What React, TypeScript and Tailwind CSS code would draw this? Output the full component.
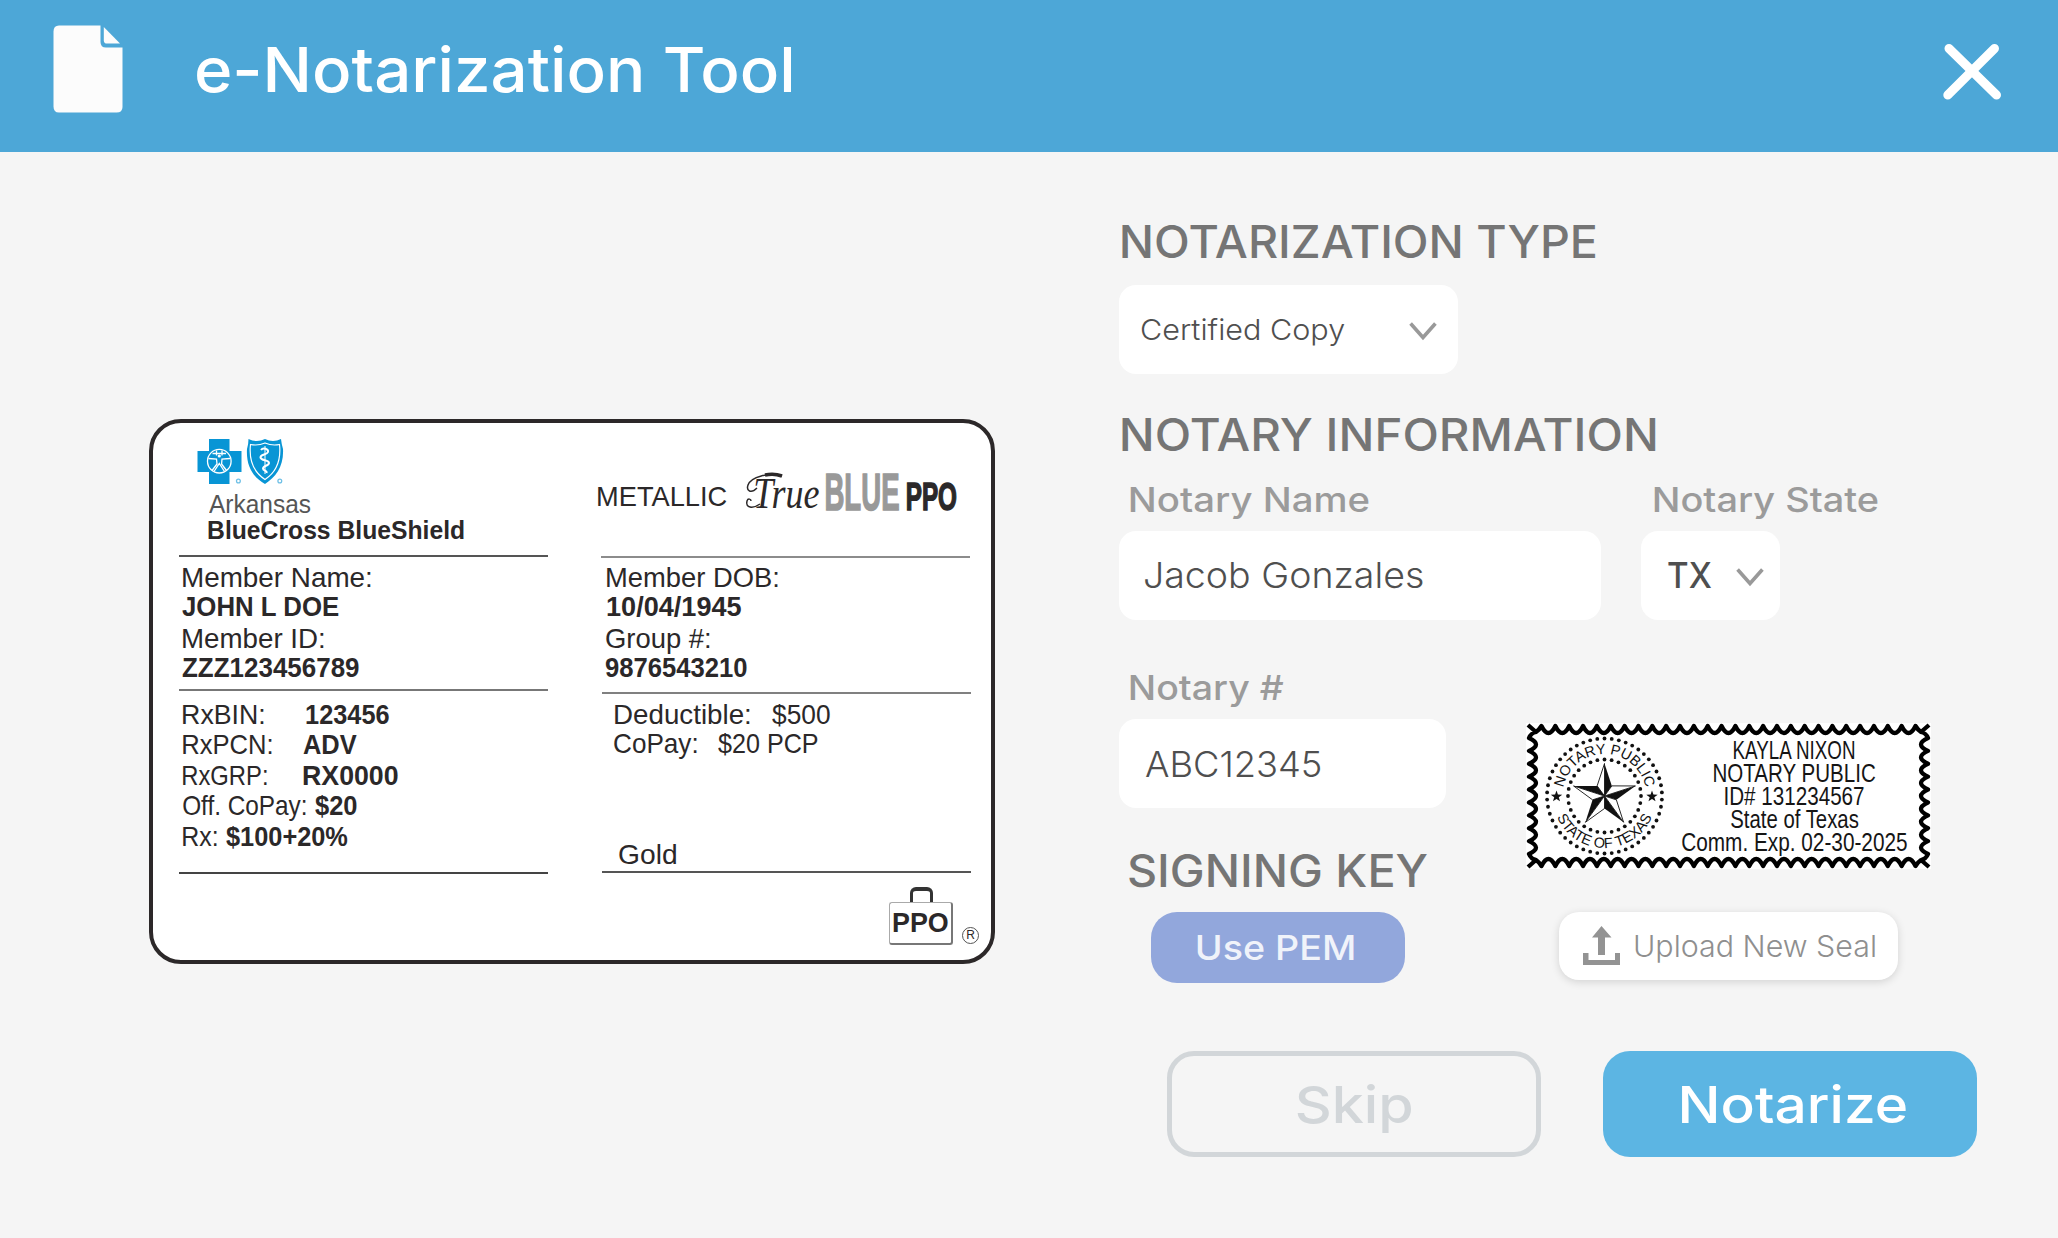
import { useLayoutEffect, useRef, type ReactNode } from "react";

const INTER = "font-['Inter',sans-serif]";
const SANS = "font-['Liberation_Sans',sans-serif]";

/** One line of text whose ink is stretched to the exact width of its box. */
function Fit({ children, className = "" }: { children: string; className?: string }) {
  const box = useRef<HTMLSpanElement>(null);
  const ink = useRef<HTMLSpanElement>(null);
  useLayoutEffect(() => {
    const outer = box.current;
    const inner = ink.current;
    const ctx = document.createElement("canvas").getContext("2d");
    if (!outer || !inner || !ctx) return;
    const s = getComputedStyle(inner);
    ctx.font = `${s.fontStyle} ${s.fontWeight} ${s.fontSize} ${s.fontFamily}`;
    const m = ctx.measureText(children);
    const scale = outer.clientWidth / (m.actualBoundingBoxLeft + m.actualBoundingBoxRight);
    inner.style.transform = `translateX(${m.actualBoundingBoxLeft * scale}px) scaleX(${scale})`;
  }, [children]);
  return (
    <span ref={box} className={`block shrink-0 text-left whitespace-pre ${className}`}>
      <span ref={ink} className="inline-block origin-left">
        {children}
      </span>
    </span>
  );
}

function FileIcon() {
  return (
    <svg className="mt-[25px] ml-[53px] h-[88px] w-[70px] shrink-0" viewBox="0 0 70 88" fill="#fcfcfc">
      <path d="M6 .5H47.5V17Q47.500 22.500 53 22.500H69.500V82Q69.500 87.500 63.500 87.500H6Q.5 87.500 .5 81.500V6.500Q.5 .5 6 .5Z" />
      <path d="M50.800 2L67 18.600H54Q50.800 18.600 50.800 15.500Z" />
    </svg>
  );
}

function Chevron({ className = "" }: { className?: string }) {
  return (
    <svg className={`h-[19px] w-[28px] shrink-0 ${className}`} viewBox="0 0 28 19" fill="none" stroke="#999" strokeWidth="3.6">
      <path d="M1.600 1.500L14 15.500L26.400 1.500" />
    </svg>
  );
}

function Rule({ className = "" }: { className?: string }) {
  return <div className={`h-[2px] w-[369px] ${className}`} />;
}

function CrossShield() {
  return (
    <svg className="mt-[16px] ml-[18px] h-[46px] w-[90px]" viewBox="197 439 90 46">
      <path d="M209 439H229.500V451H241.500V472H229.500V484H209V472H197.500V451H209Z" fill="#0895d5" />
      <g fill="none" stroke="#fff" strokeWidth="1.300">
        <circle cx="219.300" cy="461.200" r="11.800" />
        <path d="M208.500 458.500L216.500 459L217 464L212 470.500M230 458.500L222 459L221.600 464L226.500 470.500M214 471.500L219.300 463.500L224.500 471.500M212.500 453.500H226M216.500 450.500V455.500M222 450.500V455.500" />
        <circle cx="219.300" cy="456" r="1.600" fill="#fff" stroke="none" />
      </g>
      <path d="M248.500 439Q257 443 265 439Q273 443 281 439Q281.500 444 283 449C284 466 276 477 265 484C253 477 246 466 247 449Q248.500 444 248.500 439Z" fill="#0895d5" />
      <path d="M250.500 444.500Q258 446 265 443Q272 446 279.500 444.500C281.500 463 275 473 265 479.500C255 473 248.500 463 250.500 444.500Z" fill="none" stroke="#fff" strokeWidth="1.200" />
      <path d="M265 446V474" stroke="#fff" strokeWidth="1" />
      <path d="M261 450C263 447 269 449 268 452C267 455 260 454 260.500 457.500C261 461 269 459.500 269 463C269 466 263 465.500 263 468.500C263 471 267.500 470.500 266.500 473" fill="none" stroke="#fff" strokeWidth="2" />
      <g fill="none" stroke="#6fc0e6" strokeWidth="1.300">
        <circle cx="238.400" cy="481" r="1.900" />
        <circle cx="279.800" cy="481" r="1.900" />
      </g>
    </svg>
  );
}

function Pair({ label, lw, value, vw, gap }: { label: string; lw: string; value: string; vw: string; gap: string }) {
  return (
    <div className="flex h-[30.5px] pl-1 leading-[32px]">
      <Fit className={lw}>{label}</Fit>
      <Fit className={`font-bold ${vw} ${gap}`}>{value}</Fit>
    </div>
  );
}

function InsuranceCard() {
  return (
    <section className={`${SANS} mt-[267px] ml-[149px] flex h-[545px] w-[846px] shrink-0 rounded-[32px] border-4 border-[#2c2829] bg-white pl-[26px] text-[28px] leading-[27.5px] text-[#2b2829]`}>
      <div className="w-[369px]">
        <CrossShield />
        <Fit className="mt-[7px] ml-[30px] h-[24px] w-[102px] text-[26px] leading-[25px] text-[#555]">Arkansas</Fit>
        <Fit className="ml-[29px] h-[28px] w-[256px] text-[26.5px] leading-[29px] font-bold">BlueCross BlueShield</Fit>
        <Rule className="mt-[11px] bg-[#555]" />
        <Fit className="mt-[7px] ml-1 h-[26px] w-[188px]">Member Name:</Fit>
        <Fit className="mt-[2.500px] ml-[3px] h-[26px] w-[157px] font-bold">JOHN L DOE</Fit>
        <Fit className="mt-[6.500px] ml-1 h-[26px] w-[141px]">Member ID:</Fit>
        <Fit className="mt-[3px] ml-[3px] h-[26px] w-[177px] font-bold">ZZZ123456789</Fit>
        <Rule className="mt-[9px] bg-[#777]" />
        <div className="mt-[7.750px]">
          <Pair label="RxBIN:" lw="w-[81px]" value="123456" vw="w-[83px]" gap="ml-[42px]" />
          <Pair label="RxPCN:" lw="w-[89px]" value="ADV" vw="w-[54px]" gap="ml-[31px]" />
          <Pair label="RxGRP:" lw="w-[84px]" value="RX0000" vw="w-[95px]" gap="ml-[36px]" />
          <Pair label="Off. CoPay:" lw="w-[123px]" value="$20" vw="w-[42px]" gap="ml-[9px]" />
          <Pair label="Rx:" lw="w-[34px]" value="$100+20%" vw="w-[122px]" gap="ml-[9px]" />
        </div>
        <Rule className="mt-[20.750px] bg-[#444]" />
      </div>

      <div className="ml-[53px] w-[380px]">
        <div className="flex h-[133px] pt-[46px]">
          <Fit className="mt-[7px] -ml-[3px] h-[40px] w-[129px] text-[28px] leading-[41px]">METALLIC</Fit>
          <div className="relative ml-[18px] h-[50px] w-[74px]">
            <svg className="absolute top-[3px] left-0 h-[40px] w-[40px]" viewBox="0 0 40 40" fill="none" stroke="#2b2829">
              <path d="M37 4C24 0 6 5 3 13C1 19 6 22 12 16" strokeWidth="1.500" />
              <path d="M20 3Q29 1 37 4" strokeWidth="3.500" />
              <path d="M15 32C8 37 0 36 2 29C3 26 6 27 6 29" strokeWidth="1.500" />
            </svg>
            <Fit className="ml-[10px] w-[64px] font-['Liberation_Serif',serif] text-[44px] leading-[50px] font-medium italic">True</Fit>
          </div>
          <Fit className="ml-[7px] h-[50px] w-[73px] text-[51px] leading-[48px] font-bold text-[#999] [-webkit-text-stroke:1.5px_#999]">BLUE</Fit>
          <Fit className="ml-[8px] h-[50px] w-[49px] text-[38px] leading-[56px] font-bold [-webkit-text-stroke:1.5px_#2b2829]">PPO</Fit>
        </div>
        <Rule className="bg-[#8c8c8c]" />
        <Fit className="mt-[6px] ml-[6px] h-[26px] w-[171px]">Member DOB:</Fit>
        <Fit className="mt-[2.500px] ml-[6px] h-[26px] w-[134px] font-bold">10/04/1945</Fit>
        <Fit className="mt-[6.500px] ml-[5px] h-[26px] w-[104px]">Group #:</Fit>
        <Fit className="mt-[3px] ml-1 h-[26px] w-[142px] font-bold">9876543210</Fit>
        <Rule className="mt-[12px] ml-px bg-[#808080]" />
        <div className="mt-[7px] ml-[14px] flex">
          <Fit className="h-[26px] w-[135px]">Deductible:</Fit>
          <Fit className="ml-[22px] h-[26px] w-[58px]">$500</Fit>
        </div>
        <div className="mt-[3px] ml-[13px] flex">
          <Fit className="h-[26px] w-[83px]">CoPay:</Fit>
          <Fit className="ml-[21px] h-[26px] w-[100px]">$20 PCP</Fit>
        </div>
        <Fit className="mt-[84.500px] ml-[18px] h-[26px] w-[57px]">Gold</Fit>
        <Rule className="mt-[4px] ml-px bg-[#555]" />
        <div className="mt-[14px] ml-[288px] flex h-[60px]">
          <div className="flex w-[64px] flex-col items-center">
            <div className="h-[15px] w-[23px] rounded-t-[6px] border-x-[3px] border-t-4 border-[#333]" />
            <div className="flex h-[43px] w-[64px] justify-center rounded-[3px] border border-r-2 border-b-2 border-[#777] border-t-[#aaa] border-l-[#aaa] pt-[6px]">
              <Fit className="h-[26px] w-[55px] text-[28px] font-bold">PPO</Fit>
            </div>
          </div>
          <div className="mt-[40px] ml-[9px] flex size-[17px] items-center justify-center rounded-full border border-[#555] text-[12px] leading-none">R</div>
        </div>
      </div>
    </section>
  );
}

const starPoint = (cx: number, cy: number, r: number, deg: number) => {
  const a = (deg * Math.PI) / 180;
  return `${(cx + r * Math.sin(a)).toFixed(2)} ${(cy - r * Math.cos(a)).toFixed(2)}`;
};

function Dots({ r, count }: { r: number; count: number }) {
  return (
    <>
      {Array.from({ length: count }, (_, i) => {
        const a = (i * 2 * Math.PI) / count;
        return <circle key={i} cx={78.5 + r * Math.sin(a)} cy={73 - r * Math.cos(a)} r="1.9" />;
      })}
    </>
  );
}

function SmallStar({ cx }: { cx: number }) {
  const pts = Array.from({ length: 10 }, (_, i) => starPoint(cx, 73.5, i % 2 ? 2.4 : 6, i * 36));
  return <path d={`M${pts.join("L")}Z`} />;
}

function stampEdge() {
  const nx = 27;
  const ny = 9;
  const x0 = 15.5, x1 = 389.5, y0 = 15, y1 = 131;
  const px = (x1 - x0) / nx;
  const py = (y1 - y0) / ny;
  let d = `M2 2L10 9Q13 7 ${x0} 3`;
  for (let i = 0; i < nx; i++) d += `q${px / 2} 14 ${px} 0`;
  d += `Q392 7 395 9L403 2M395 9Q400 10 402 ${y0}`;
  for (let i = 0; i < ny; i++) d += `q-14 ${py / 2} 0 ${py}`;
  d += `Q400 136 395 137L403 144M395 137Q392 139 ${x1} 143`;
  for (let i = 0; i < nx; i++) d += `q${-px / 2} -14 ${-px} 0`;
  d += `Q13 139 10 137L2 144M10 137Q5 136 3 ${y1}`;
  for (let i = 0; i < ny; i++) d += `q14 ${-py / 2} 0 ${-py}`;
  return d + `Q5 10 10 9`;
}

function SealEmblem() {
  return (
    <svg className="absolute inset-0 h-[146px] w-[405px]" viewBox="0 0 405 146">
      <path d={stampEdge()} fill="none" stroke="#000" strokeWidth="4.300" strokeLinejoin="round" />
      <g fill="#111">
        <Dots r={57.5} count={50} />
        <Dots r={36.5} count={32} />
        <SmallStar cx={30.5} />
        <SmallStar cx={126} />
        {[0, 72, 144, 216, 288].map((a) => (
          <g key={a}>
            <path d={`M78.500 73L${starPoint(78.5, 73, 32.5, a)}L${starPoint(78.5, 73, 12.5, a + 36)}Z`} />
            <path
              d={`M78.500 73L${starPoint(78.5, 73, 32.5, a)}L${starPoint(78.5, 73, 12.5, a - 36)}Z`}
              fill="#fff"
              stroke="#111"
              strokeWidth=".9"
            />
          </g>
        ))}
      </g>
      <path id="arc-top" d="M36.500 73A42 42 0 0 1 120.500 73" fill="none" />
      <path id="arc-bottom" d="M26.500 73A52 52 0 0 0 130.500 73" fill="none" />
      <g className={SANS} fontSize="14.5" fill="#111" textAnchor="middle">
        <text>
          <textPath href="#arc-top" startOffset="50%">NOTARY PUBLIC</textPath>
        </text>
        <text>
          <textPath href="#arc-bottom" startOffset="50%">STATE OF TEXAS</textPath>
        </text>
      </g>
    </svg>
  );
}

function NotarySeal() {
  return (
    <div className={`${SANS} relative mt-[3px] ml-[80px] h-[146px] w-[405px] shrink-0 bg-white text-[26.500px] text-[#151515]`}>
      <SealEmblem />
      <div className="ml-[156px] flex w-[225px] flex-col items-center pt-[16px] leading-[23.100px]">
        <Fit className="h-[23.100px] w-[121px]">KAYLA NIXON</Fit>
        <Fit className="h-[23.100px] w-[162px]">NOTARY PUBLIC</Fit>
        <Fit className="h-[23.100px] w-[139px]">ID# 131234567</Fit>
        <Fit className="h-[23.100px] w-[128px]">State of Texas</Fit>
        <Fit className="h-[23.100px] w-[225px]">Comm. Exp. 02-30-2025</Fit>
      </div>
    </div>
  );
}

function Heading({ children, className }: { children: string; className: string }) {
  return (
    <h2 className={className}>
      <Fit className="h-[44px] text-[44.500px] leading-[44px] font-medium text-[#757575]">{children}</Fit>
    </h2>
  );
}

function Label({ children, className }: { children: string; className: string }) {
  return <Fit className={`h-[34px] text-[34px] leading-[35px] font-medium text-[#9b9b9b] ${className}`}>{children}</Fit>;
}

function Field({ children, className }: { children: ReactNode; className: string }) {
  return <div className={`flex h-[89px] shrink-0 rounded-[17px] bg-white leading-[90px] text-[#4f4f4f] ${className}`}>{children}</div>;
}

function UploadIcon() {
  return (
    <svg className="mt-[14px] h-[39px] w-[37px] shrink-0" viewBox="0 0 37 39" fill="#939393">
      <path d="M18.500 0L28.500 11.500H22V29H15V11.500H9Z" />
      <path d="M0 27H5.500V34H32V27H37.500V39H0Z" />
    </svg>
  );
}

export default function App() {
  return (
    <div className={`${INTER} h-[1238px] w-[2058px] overflow-hidden bg-[#f5f5f5]`}>
      <header className="flex h-[152px] bg-[#4da7d7]">
        <FileIcon />
        <Fit className="mt-[29px] ml-[73px] h-[80px] w-[596px] text-[62px] leading-[81px] font-medium text-white">e-Notarization Tool</Fit>
        <svg className="mt-[43px] mr-[57px] ml-auto h-[57px] w-[58px]" viewBox="0 0 58 57" fill="none" stroke="#fff" strokeWidth="9" strokeLinecap="round">
          <path d="M6 5.500L53.500 52M51.500 5.500L4.800 52" />
        </svg>
      </header>

      <main className="flex h-[1086px]">
        <div className="w-[1119px] shrink-0">
          <InsuranceCard />
        </div>

        <div className="w-[939px]">
          <Heading className="mt-[67.500px] ml-[3px] w-[474px]">NOTARIZATION TYPE</Heading>
          <Field className="mt-[21px] w-[339px] text-[29px]">
            <Fit className="ml-[22px] w-[204px] font-[350]">Certified Copy</Fit>
            <Chevron className="mt-[37px] ml-[64px]" />
          </Field>

          <Heading className="mt-[39px] ml-[3px] w-[534px]">NOTARY INFORMATION</Heading>
          <div className="mt-[25.500px] flex">
            <Label className="ml-[11px] w-[239px]">Notary Name</Label>
            <Label className="ml-[285px] w-[224px]">Notary State</Label>
          </div>
          <div className="mt-[15px] flex">
            <Field className="w-[482px] text-[35.500px]">
              <Fit className="ml-[26px] w-[278px] font-[350]">Jacob Gonzales</Fit>
            </Field>
            <Field className="ml-[40px] w-[139px] text-[35.500px]">
              <Fit className="ml-[27px] w-[43px] font-medium">TX</Fit>
              <Chevron className="mt-[37px] ml-[25px]" />
            </Field>
          </div>

          <div className="mt-[50px] flex h-[189px]">
            <div className="w-[327px] shrink-0">
              <Label className="ml-[11px] w-[154px]">Notary #</Label>
              <Field className="mt-[15px] w-[327px] text-[36px]">
                <Fit className="ml-[27px] w-[175px] font-[350]">ABC12345</Fit>
              </Field>
            </div>
            <div className="pt-[50px]">
              <NotarySeal />
            </div>
          </div>

          <div className="mt-[-10px] flex h-[134px]">
            <div className="w-[327px] shrink-0">
              <Heading className="ml-[10px] w-[298px]">SIGNING KEY</Heading>
              <button className="mt-[19px] ml-[32px] flex h-[71px] w-[254px] rounded-[26px] bg-[#92a7dc]">
                <Fit className="ml-[46px] w-[157px] text-[34px] leading-[72px] font-medium text-[#f0f3fa]">Use PEM</Fit>
              </button>
            </div>
            <button className="mt-[63px] ml-[113px] flex h-[68px] w-[339px] rounded-[20px] bg-white pl-[24px] shadow-[0_2px_8px_rgba(0,0,0,0.14)]">
              <UploadIcon />
              <Fit className="ml-[15px] w-[240px] text-[30px] leading-[68px] font-light text-[#8f8f8f]">Upload New Seal</Fit>
            </button>
          </div>

          <div className="mt-[68px] ml-[48px] flex">
            <button className="flex h-[106px] w-[374px] rounded-[27px] border-[5px] border-[#d2d6d9]">
              <Fit className="ml-[125px] w-[115px] text-[51px] leading-[97px] font-medium text-[#d2d6d9]">Skip</Fit>
            </button>
            <button className="ml-[62px] flex h-[106px] w-[374px] rounded-[27px] bg-[#5cb5e3]">
              <Fit className="ml-[79px] w-[224px] text-[51px] leading-[107px] font-medium text-white">Notarize</Fit>
            </button>
          </div>
        </div>
      </main>
    </div>
  );
}
